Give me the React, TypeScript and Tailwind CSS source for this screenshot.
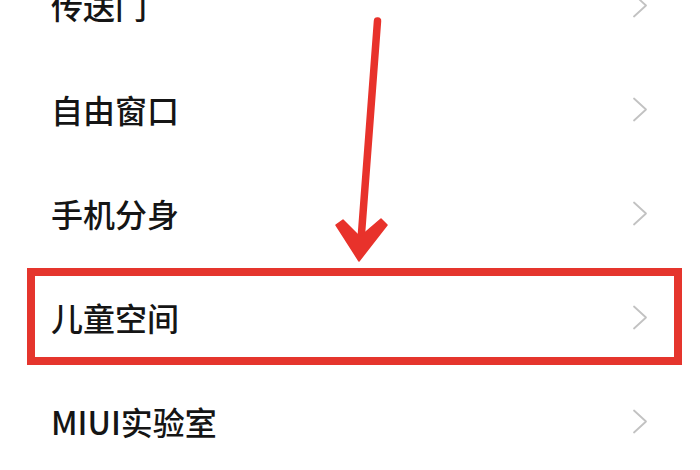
import React from "react";

const items = ["传送门", "自由窗口", "手机分身", "儿童空间", "MIUI实验室"];

function Chevron() {
  return (
    <svg width="16" height="25" viewBox="0 0 16 25" className="shrink-0">
      <polyline points="2,1.5 14,12.5 2,23.5" fill="none" stroke="#c2c2c2" strokeWidth="1.8" strokeLinecap="round" strokeLinejoin="round" />
    </svg>
  );
}

export default function App() {
  return (
    <div className="relative w-[700px] h-[470px] overflow-hidden bg-white font-['Noto_Sans_CJK_SC','Noto_Sans',sans-serif]">
      <div className="flex flex-col -mt-[47px]">
        {items.map((t, i) => (
          <div key={t} className="relative h-[104px] flex items-center justify-between pl-[51px] pr-[52px]">
            <span className="text-[32px] leading-none font-medium text-[#151515]">{t}</span>
            <Chevron />
            {i === 3 && (
              <div className="absolute left-[27px] right-[18px] top-[3px] bottom-[4px] border-[8px] border-[#e5352d]" />
            )}
          </div>
        ))}
      </div>
      <svg className="absolute inset-0 pointer-events-none" width="700" height="470" viewBox="0 0 700 470">
        <line x1="377.5" y1="21" x2="361" y2="240" stroke="#e8322b" strokeWidth="7.5" strokeLinecap="round" />
        <polygon points="359,261 336,225 343,220 360,237 381,219 387,225" fill="#e8322b" stroke="#e8322b" strokeWidth="1.5" strokeLinejoin="round" />
      </svg>
    </div>
  );
}
